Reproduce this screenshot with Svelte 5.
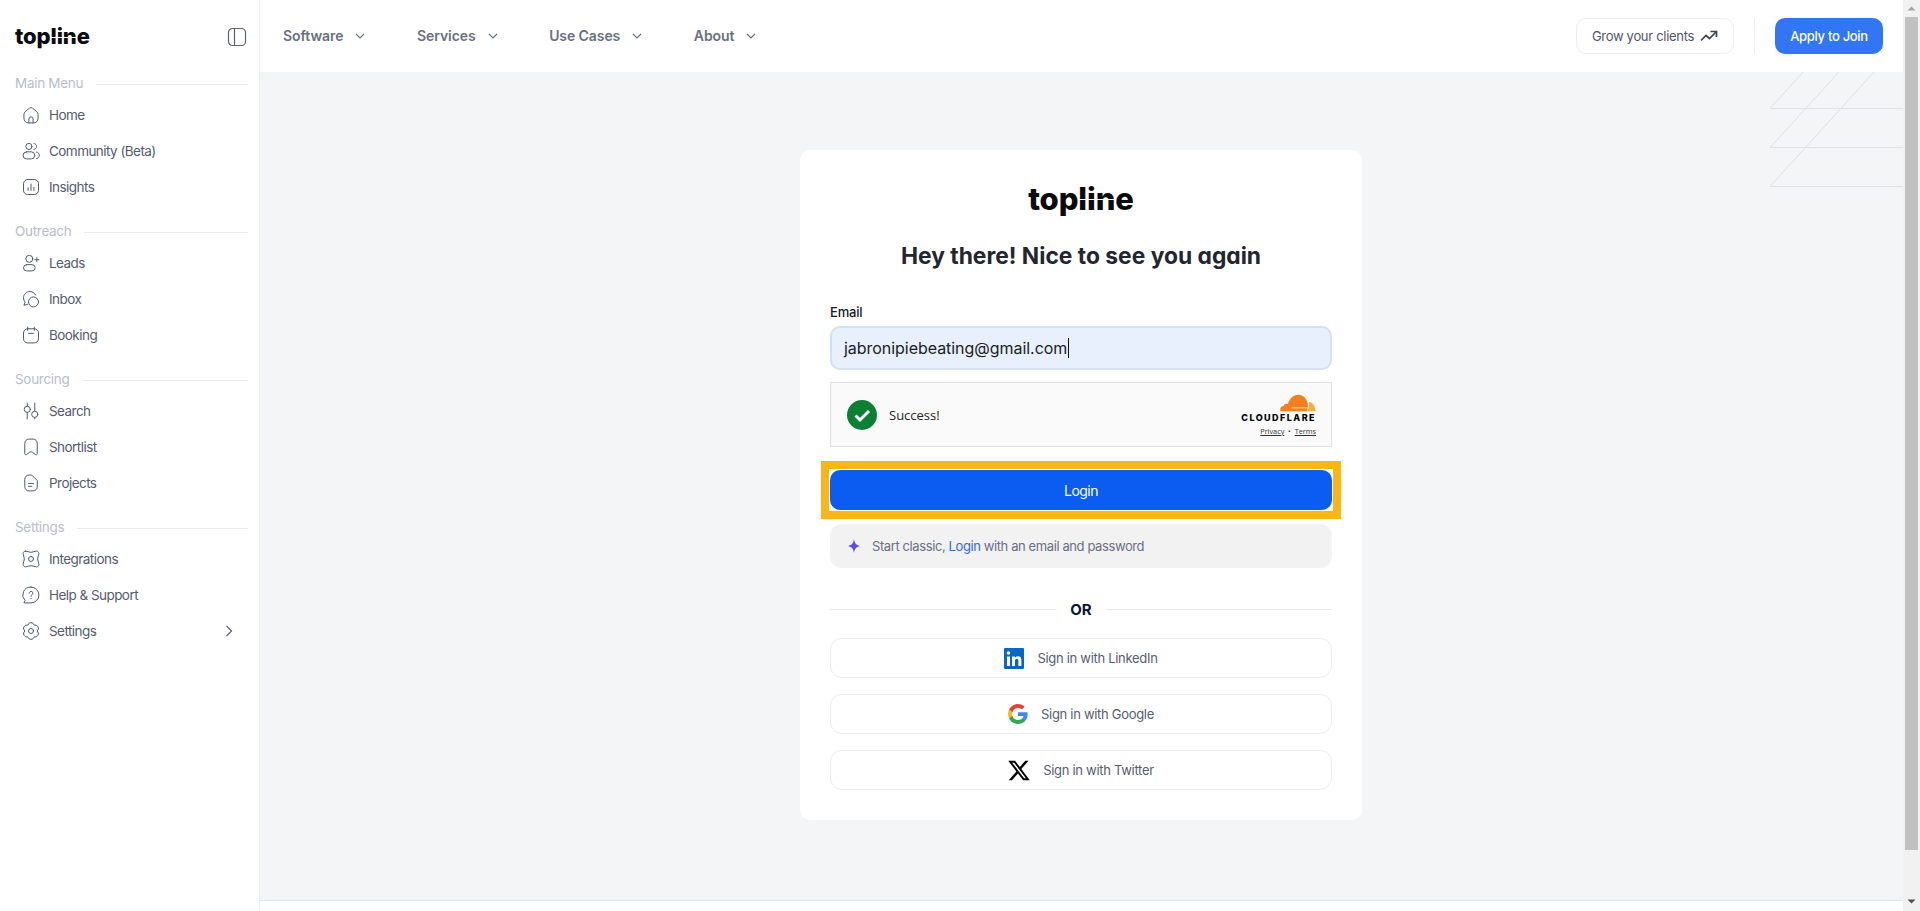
<script>
  const icons = {
    home: '<path d="M3.500 11.200c0-1.300.5-2.300 1.500-3.100l5-4.200c1.200-.9 2.800-.9 4 0l5 4.200c1 .8 1.500 1.800 1.500 3.100V16c0 3-2.200 5.500-5.200 5.500H8.700c-3 0-5.200-2.500-5.200-5.500z"/><path d="M9.500 21.500v-4.800a2.500 2.500 0 0 1 5 0v4.800"/>',
    community: '<circle cx="9.500" cy="6.500" r="3.700"/><path d="M15.500 2.900c1.900.4 3.200 1.800 3.200 3.600s-1.300 3.200-3.200 3.600"/><rect x="2.500" y="13" width="14" height="8.500" rx="4.200"/><path d="M18.500 13.200c2 .4 3.500 2 3.500 4s-1.500 3.600-3.500 4"/>',
    insights: '<rect x="3" y="3" width="18" height="18" rx="5"/><path d="M8.500 13v3M12 8.500V16M15.500 12.500V16"/>',
    leads: '<circle cx="10" cy="7" r="4.200"/><rect x="3" y="14" width="14" height="7.500" rx="3.700"/><path d="M19 5.500v5M16.500 8h5"/>',
    inbox: '<path d="M10.500 3C6.300 3 3 6.300 3 10.500c0 2 .7 3.800 2 5.100l-1.500 4 4.300-1.200"/><path d="M10.500 3c3 0 5.700 1.600 7 4.200"/><circle cx="15" cy="15.500" r="6"/>',
    booking: '<rect x="3" y="4.500" width="18" height="17" rx="5"/><path d="M8 2.500v4M16 2.500v4M9 10h6"/>',
    search: '<path d="M7.500 2.500v3.500M7.500 14v7.500M16.500 2.500v9.500M16.500 20v1.500"/><circle cx="7.500" cy="10" r="3.700"/><circle cx="16.500" cy="16" r="3.700"/>',
    shortlist: '<path d="M4.500 7.500c0-2.800 2.200-5 5-5h5c2.800 0 5 2.200 5 5V20c0 1.200-1.200 1.800-2.200 1.100L14 18.500c-1.200-.9-2.800-.9-4 0l-3.300 2.600c-1 .7-2.200.1-2.200-1.100z"/>',
    projects: '<path d="M4.500 7.500c0-2.800 2.200-5 5-5H13l6.500 6.500v7.500c0 2.800-2.200 5-5 5h-5c-2.800 0-5-2.200-5-5z"/><path d="M9 12.500h6M9 16h4"/>',
    integrations: '<path d="M5.500 2.500c2.300 0 3.800 1.500 6.500 1.500s4.200-1.500 6.500-1.500c1.700 0 3 1.300 3 3 0 2.300-1.500 3.800-1.500 6.500s1.500 4.200 1.500 6.500c0 1.700-1.300 3-3 3-2.300 0-3.800-1.500-6.500-1.500s-4.200 1.500-6.500 1.500c-1.700 0-3-1.300-3-3C2.500 16.200 4 14.700 4 12S2.500 7.800 2.500 5.500c0-1.700 1.300-3 3-3z"/><circle cx="12" cy="12" r="3"/>',
    help: '<path d="M12 2.500a9.500 9.500 0 0 1 0 19H3.500l1.400-2.800A9.500 9.500 0 0 1 12 2.500z"/><path d="M9.800 9.800a2.200 2.200 0 1 1 3.400 1.900c-.8.5-1.200 1-1.200 1.800M12 16.200v.2"/>',
    settings: '<path d="M9.500 2.800c1.200-1 3.800-1 5 0l1.300 2 2.500.3c1.600.5 3 2.900 2.600 4.500L19.500 12l1.400 2.400c.4 1.600-1 4-2.600 4.500l-2.500.3-1.300 2c-1.200 1-3.800 1-5 0l-1.300-2-2.500-.3c-1.600-.5-3-2.900-2.600-4.500L4.500 12 3.100 9.600c-.4-1.600 1-4 2.600-4.500l2.500-.3z"/><circle cx="12" cy="12" r="3"/>'
  };

  const groups = [
    { title: 'Main Menu', items: [['home', 'Home'], ['community', 'Community (Beta)'], ['insights', 'Insights']] },
    { title: 'Outreach', items: [['leads', 'Leads'], ['inbox', 'Inbox'], ['booking', 'Booking']] },
    { title: 'Sourcing', items: [['search', 'Search'], ['shortlist', 'Shortlist'], ['projects', 'Projects']] },
    { title: 'Settings', items: [['integrations', 'Integrations'], ['help', 'Help & Support'], ['settings', 'Settings']] }
  ];

  const nav = ['Software', 'Services', 'Use Cases', 'About'];
</script>

<div class="page">
  <aside class="sidebar">
    <div class="brand">
      <span class="logo small">topline</span>
      <svg class="panel" width="20" height="20" viewBox="0 0 20 20" fill="none" stroke="#5b6072" stroke-width="1.200">
        <rect x="1.500" y="1.500" width="17" height="17" rx="4" />
        <path d="M7.500 1.500v17" />
      </svg>
    </div>

    {#each groups as group}
      <section class="group">
        <div class="group-title"><span>{group.title}</span><i></i></div>
        {#each group.items as [icon, label]}
          <a class="item" href="#top">
            <svg width="20" height="20" viewBox="0 0 24 24" fill="none" stroke="#525870" stroke-width="1.200" stroke-linecap="round" stroke-linejoin="round">{@html icons[icon]}</svg>
            <span>{label}</span>
            {#if label === 'Settings' && group.title === 'Settings'}
              <svg class="more" width="8" height="12" viewBox="0 0 8 12" fill="none" stroke="#5b6072" stroke-width="1.200"><path d="M1.500 1l5 5-5 5" /></svg>
            {/if}
          </a>
        {/each}
      </section>
    {/each}
  </aside>

  <div class="column">
    <header class="topbar">
      <nav>
        {#each nav as link}
          <a href="#top">
            {link}
            <svg width="10" height="6" viewBox="0 0 10 6" fill="none" stroke="#6b7086" stroke-width="1.200"><path d="M1 1l4 4 4-4" /></svg>
          </a>
        {/each}
      </nav>
      <div class="actions">
        <button class="grow">
          Grow your clients
          <svg width="18" height="12" viewBox="0 0 18 12" fill="none" stroke="#3d4356" stroke-width="1.700"><path d="M1 10.500l5-5 3.500 3L16 2" /><path d="M10.500 1.500h6v5.500" /></svg>
        </button>
        <i class="divider"></i>
        <button class="apply">Apply to Join</button>
      </div>
    </header>

    <main class="content">
      <svg class="pattern" width="133" height="115" viewBox="0 0 133 115" fill="none" stroke="#dfe0e3">
        <path d="M0 36.500h133M0 75.500h133M0 114.500h133" />
        <path d="M0 36.500L33 0M0 75.500L69 0M0 114.500L104 0" />
      </svg>

      <div class="card">
        <div class="card-logo"><span class="logo big">topline</span></div>
        <h1>Hey there! Nice to see you again</h1>

        <label for="email">Email</label>
        <div class="input" id="email">jabronipiebeating@gmail.com<i class="caret"></i></div>

        <div class="captcha">
          <svg width="30" height="30" viewBox="0 0 30 30">
            <circle cx="15" cy="15" r="15" fill="#0b7f34" />
            <path d="M8.500 15.500l4.500 4.500 9-9" fill="none" stroke="#fff" stroke-width="3" />
          </svg>
          <span class="success">Success!</span>
          <div class="cf">
            <svg width="37" height="18" viewBox="0 0 36 17">
              <path d="M27 16.500H1.500C.5 14 1.800 11.500 4.500 11.300c.4-1.700 2.300-2.500 4-1.700C10 4.500 14 .5 18.500.5c4 0 7.500 2.500 8.800 6.500C28.500 9.500 28.300 13.500 27 16.500z" fill="#f38020" />
              <path d="M29 7.500c3.500 0 6.500 3.500 6.500 9H27.700c1.300-3 1.500-6 1.300-9z" fill="#faae40" />
              <path d="M12 13.200h15" stroke="#fff" stroke-width=".7" />
            </svg>
            <strong>CLOUDFLARE</strong>
            <small><u>Privacy</u> &nbsp;•&nbsp; <u>Terms</u></small>
          </div>
        </div>

        <div class="login-frame"><button class="login">Login</button></div>

        <div class="hint">
          <svg width="12" height="14" viewBox="0 0 12 14"><path d="M6 0c.6 4 2 6 6 7-4 1-5.400 3-6 7-.6-4-2-6-6-7 4-1 5.400-3 6-7z" fill="#5f4be6" /></svg>
          <span>Start classic, <a href="#top">Login</a> with an email and password</span>
        </div>

        <div class="or"><i></i><b>OR</b><i></i></div>

        <button class="social">
          <svg width="20" height="21" viewBox="0 0 20 21">
            <rect width="20" height="21" rx="1" fill="#0a66c2" />
            <circle cx="4.500" cy="5" r="1.800" fill="#fff" />
            <path d="M3 8.500h3V18H3zM8 8.500h2.900v1.300c.6-1 1.700-1.600 3-1.600 2.500 0 3.500 1.600 3.500 4.200V18h-3v-5c0-1.300-.4-2.200-1.600-2.200-1.300 0-1.800 1-1.800 2.200v5H8z" fill="#fff" />
          </svg>
          Sign in with LinkedIn
        </button>
        <button class="social">
          <svg width="20" height="20" viewBox="0 0 24 24">
            <path d="M23.500 12.300c0-.9-.1-1.600-.2-2.300H12v4.500h6.500c-.3 1.500-1.100 2.800-2.400 3.600v3h3.900c2.300-2.100 3.500-5.200 3.500-8.800z" fill="#4285f4" />
            <path d="M12 24c3.200 0 6-1.100 8-2.900l-3.900-3c-1.100.7-2.500 1.200-4.100 1.200-3.100 0-5.800-2.100-6.700-5H1.300v3.100C3.300 21.300 7.300 24 12 24z" fill="#34a853" />
            <path d="M5.300 14.300c-.5-1.500-.5-3.100 0-4.600V6.600h-4c-1.700 3.300-1.700 7.500 0 10.800z" fill="#fbbc05" />
            <path d="M12 4.700c1.800 0 3.300.6 4.600 1.800l3.400-3.400C18 1.200 15.200 0 12 0 7.300 0 3.300 2.700 1.300 6.600l4 3.100c.9-2.900 3.600-5 6.700-5z" fill="#ea4335" />
          </svg>
          Sign in with Google
        </button>
        <button class="social">
          <svg width="22" height="21" viewBox="1 2 22 20">
            <path d="M18.244 2.250h3.308l-7.227 8.260 8.502 11.240H16.170l-5.214-6.817L4.990 21.750H1.680l7.730-8.835L1.254 2.250H8.080l4.713 6.231zm-1.161 17.520h1.833L7.084 4.126H5.117z" fill="#000" />
          </svg>
          Sign in with Twitter
        </button>
      </div>
    </main>

    <footer class="foot"></footer>
  </div>

  <div class="scrollbar">
    <svg width="17" height="17" viewBox="0 0 17 17"><path d="M4.500 10.500l4-4 4 4z" fill="#a3a3a3" /></svg>
    <i class="thumb"></i>
    <svg class="down" width="17" height="17" viewBox="0 0 17 17"><path d="M4.500 6.500l4 4 4-4z" fill="#505050" /></svg>
  </div>
</div>

<style>
  :global(body) {
    margin: 0;
    background: #fff;
    font-family: Inter, "Liberation Sans", sans-serif;
  }

  .page {
    display: flex;
    height: 911px;
    overflow: hidden;
  }

  .sidebar {
    flex: none;
    width: 233px;
    border-right: 1px solid #eceef1;
    padding: 0 11px 0 15px;
  }

  .brand {
    display: flex;
    align-items: center;
    justify-content: space-between;
    height: 72px;
    padding-bottom: 2px;
  }

  .panel {
    margin: 2px 1px 0 0;
  }

  .logo {
    display: inline-block;
    position: relative;
    color: #0b0b0f;
    font-weight: 800;
    line-height: 1;
  }

  .logo::after {
    content: "";
    position: absolute;
    left: 47%;
    width: 34%;
    top: 54%;
    height: 1px;
    background: #fff;
  }

  .logo.small {
    font-size: 22px;
    letter-spacing: -0.1px;
  }

  .logo.big {
    font-size: 31px;
    letter-spacing: -0.1px;
  }

  .group {
    margin-bottom: 17px;
  }

  .group-title {
    display: flex;
    align-items: center;
    gap: 13px;
    height: 18px;
    color: #b9bdc7;
    font-size: 13.500px;
    letter-spacing: -0.3px;
  }

  .group-title i {
    flex: 1;
    height: 1px;
    margin-top: 3px;
    background: #e9ebee;
  }

  .group-title + .item {
    margin-top: 5px;
  }

  .item {
    display: flex;
    align-items: center;
    gap: 8px;
    height: 36px;
    padding-left: 6px;
    color: #555b71;
    font-size: 13.500px;
    letter-spacing: -0.55px;
    text-decoration: none;
  }

  .more {
    margin-left: auto;
    margin-right: 15px;
  }

  .column {
    flex: 1;
    display: flex;
    flex-direction: column;
    min-width: 0;
  }

  .topbar {
    display: flex;
    align-items: center;
    justify-content: space-between;
    box-sizing: border-box;
    height: 72px;
    flex: none;
    padding: 0 20px 0 23px;
  }

  nav {
    display: flex;
    gap: 51.600px;
    margin-top: -1px;
  }

  nav a {
    display: flex;
    align-items: center;
    gap: 12px;
    color: #6a6f85;
    font-size: 14px;
    font-weight: 600;
    text-decoration: none;
    letter-spacing: -0.08px;
  }

  .actions {
    display: flex;
    align-items: center;
    height: 36px;
  }

  .actions button {
    height: 36px;
    border-radius: 10px;
    font-family: inherit;
    font-size: 13px;
    letter-spacing: -0.3px;
  }

  .grow {
    display: flex;
    align-items: center;
    gap: 6px;
    width: 158px;
    justify-content: center;
    background: #fff;
    border: 1px solid #eceef1;
    color: #4f556b;
    padding: 0;
  }

  .divider {
    width: 1px;
    height: 36px;
    margin: 0 20px;
    background: #eceef1;
  }

  .apply {
    width: 108px;
    background: #3276f6;
    border: 0;
    color: #fff;
    font-weight: 500;
  }

  .content {
    position: relative;
    flex: 1;
    display: flex;
    justify-content: center;
    align-items: flex-start;
    padding-top: 78px;
    background: #f4f5f7;
  }

  .pattern {
    position: absolute;
    top: 0;
    right: 0;
  }

  .card {
    display: flex;
    flex-direction: column;
    width: 502px;
    height: 670px;
    padding: 0 30px;
    margin-right: 1px;
    border-radius: 10px;
    background: #fff;
  }

  .card-logo {
    display: flex;
    justify-content: center;
    align-items: center;
    height: 50px;
    margin-top: 23px;
  }

  h1 {
    margin: 16px 0 0;
    height: 34px;
    line-height: 34px;
    text-align: center;
    color: #23262f;
    font-size: 22.800px;
    font-weight: 700;
    font-feature-settings: "cv11";
  }

  label {
    margin-top: 30px;
    height: 18px;
    line-height: 18px;
    color: #101828;
    font-size: 13px;
    font-weight: 500;
    letter-spacing: -0.2px;
  }

  .input {
    display: flex;
    align-items: center;
    box-sizing: border-box;
    height: 44px;
    margin-top: 5px;
    padding-left: 12px;
    border: 2px solid #d5e0f0;
    border-radius: 10px;
    background: #e8f0fd;
    color: #1b1d24;
    font-size: 16px;
    letter-spacing: -0.04px;
  }

  .caret {
    width: 1px;
    height: 20px;
    margin-left: 1px;
    background: #111;
  }

  .captcha {
    display: flex;
    align-items: center;
    box-sizing: border-box;
    height: 65px;
    margin-top: 12px;
    padding: 0 15px 0 16px;
    border: 1px solid #e0e0e0;
    background: #fafafa;
  }

  .success {
    margin-left: 12px;
    color: #232323;
    font-family: "Open Sans", sans-serif;
    font-size: 13px;
  }

  .cf {
    margin-left: auto;
    display: flex;
    flex-direction: column;
    align-items: flex-end;
  }

  .cf strong {
    margin-top: 1px;
    color: #000;
    font-size: 9px;
    font-weight: 800;
    letter-spacing: 1.450px;
    line-height: 10px;
  }

  .cf small {
    margin-top: 3px;
    color: #333;
    font-family: "Open Sans", sans-serif;
    font-size: 7.300px;
    line-height: 10px;
  }

  .login-frame {
    margin: 14px -9px 0;
    padding: 1px;
    border: 8px solid #fdb515;
    background: #fff;
  }

  .login {
    display: block;
    width: 100%;
    height: 40px;
    border: 0;
    border-radius: 10px;
    background: #0b5cf0;
    color: #fff;
    font-family: inherit;
    font-size: 14px;
    letter-spacing: -0.5px;
  }

  .hint {
    display: flex;
    align-items: center;
    gap: 12px;
    height: 44px;
    margin-top: 5px;
    padding-left: 18px;
    border-radius: 12px;
    background: #f2f2f3;
    color: #6a6f85;
    font-size: 13px;
    letter-spacing: -0.4px;
  }

  .hint a {
    color: #2f6bdb;
    text-decoration: none;
  }

  .or {
    display: flex;
    align-items: center;
    gap: 14px;
    height: 20px;
    margin: 31px 0 19px;
    color: #0b1437;
    font-size: 15px;
  }

  .or i {
    flex: 1;
    height: 1px;
    background: #e9eaec;
  }

  .social {
    display: flex;
    align-items: center;
    justify-content: center;
    gap: 13px;
    height: 40px;
    margin-bottom: 16px;
    padding: 0;
    border: 1px solid #eaecef;
    border-radius: 12px;
    background: #fff;
    color: #565c72;
    font-family: inherit;
    font-size: 13px;
    letter-spacing: -0.3px;
  }

  .foot {
    height: 10px;
    flex: none;
    border-top: 1px solid #e4e5e7;
    background: #fff;
  }

  .scrollbar {
    display: flex;
    flex-direction: column;
    align-items: center;
    width: 17px;
    flex: none;
    background: #f1f1f1;
  }

  .thumb {
    width: 13px;
    height: 833px;
    background: #c1c1c1;
  }

  .down {
    margin-top: auto;
    margin-bottom: 1px;
  }
</style>
